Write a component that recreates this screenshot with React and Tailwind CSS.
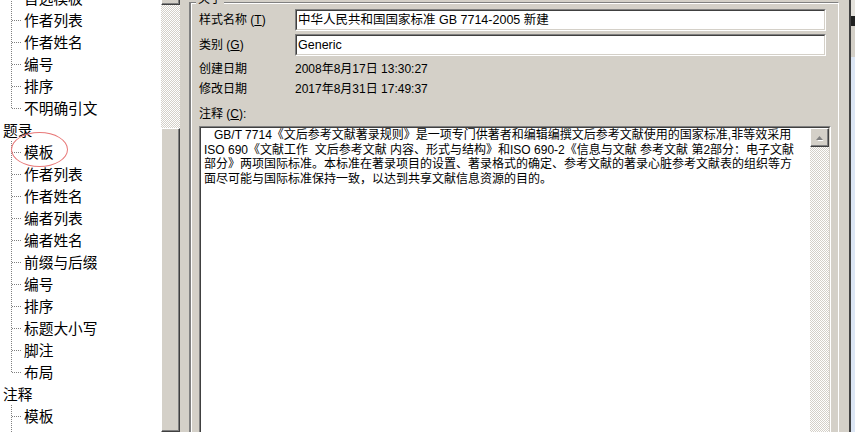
import React from 'react'

const groups = [
  { title: null, items: ['首选模板', '作者列表', '作者姓名', '编号', '排序', '不明确引文'] },
  { title: '题录', items: ['模板', '作者列表', '作者姓名', '编者列表', '编者姓名', '前缀与后缀', '编号', '排序', '标题大小写', '脚注', '布局'] },
  { title: '注释', items: ['模板', ''], more: true },
]

const noteLines = [
  '   GB/T 7714《文后参考文献著录规则》是一项专门供著者和编辑编撰文后参考文献使用的国家标准,非等效采用',
  'ISO 690《文献工作  文后参考文献 内容、形式与结构》和ISO 690-2《信息与文献 参考文献 第2部分：电子文献',
  '部分》两项国际标准。本标准在著录项目的设置、著录格式的确定、参考文献的著录心脏参考文献表的组织等方',
  '面尽可能与国际标准保持一致，以达到共享文献信息资源的目的。',
]

// dotted tree connector for one child row
function Connector({ last }) {
  return (
    <svg width="24" height="22" className="shrink-0">
      <line x1="11.5" y1="0" x2="11.5" y2={last ? 11 : 22} stroke="#808080" strokeDasharray="1 1" />
      <line x1="12" y1="11.5" x2="22" y2="11.5" stroke="#808080" strokeDasharray="1 1" />
    </svg>
  )
}

function Tree() {
  return (
    <div className="w-[161px] h-full bg-white overflow-hidden relative font-['Noto_Sans_CJK_SC',sans-serif] text-[14.7px] text-black">
      <div className="mt-[-13px]">
        {groups.map((g, gi) => (
          <div key={gi}>
            {g.title && (
              <div className="h-[22px] flex items-center pl-[3px]">{g.title}</div>
            )}
            {g.items.map((it, i) => (
              <div key={i} className="h-[22px] flex items-center">
                <Connector last={!g.more && i === g.items.length - 1} />
                <span className="leading-none">{it}</span>
              </div>
            ))}
          </div>
        ))}
      </div>
      {/* red hand-drawn ellipse round the template item */}
      <div className="absolute left-[11px] top-[132px] w-[57px] h-[35px] rounded-[50%] border border-[#e87878]" />
    </div>
  )
}

const raised = 'bg-[#d4d0c8] border-t border-l border-t-white border-l-white border-r border-b border-r-[#404040] border-b-[#404040] shadow-[inset_-1px_-1px_#808080]'
const checker = 'bg-[repeating-conic-gradient(#d4d0c8_0_25%,#ffffff_0_50%)] bg-[length:2px_2px]'

function TreeScroll() {
  return (
    <div className="w-[19px] h-full flex flex-col shrink-0">
      <div className={`h-[5px] ${raised} border-t-0`} />
      <div className={`h-[123px] ${checker}`} />
      <div className={`flex-1 ${raised}`} />
    </div>
  )
}

function Field({ children }) {
  return (
    <div className="w-[531px] h-[22px] border-t border-l border-t-[#808080] border-l-[#808080] border-b border-r border-b-white border-r-white">
      <div className="h-full bg-white border-t border-l border-t-[#404040] border-l-[#404040] border-b border-r border-b-[#d4d0c8] border-r-[#d4d0c8] pl-[1px] flex items-center whitespace-pre text-[12.5px]">
        {children}
      </div>
    </div>
  )
}

function Row({ label, children, className = '' }) {
  return (
    <div className={`flex items-center ${className}`}>
      <div className="w-[96px] shrink-0">{label}</div>
      {children}
    </div>
  )
}

export default function App() {
  return (
    <div className="w-[855px] h-[432px] overflow-hidden flex bg-[#d4d0c8] font-['Liberation_Sans','Noto_Sans_CJK_SC',sans-serif] text-[12px] text-black">
      <Tree />
      <TreeScroll />
      <div className="w-[10px] shrink-0" />

      {/* group box */}
      <div className="w-[649px] shrink-0 mt-[2px] relative border-t border-l border-t-[#808080] border-l-[#808080] border-r border-r-white shadow-[inset_1px_1px_#ffffff,_-1px_0_#808080]">
        <span className="absolute left-[5px] top-[-11px] px-[2px] bg-[#d4d0c8] leading-[14px]">关于</span>
        <div className="pl-[8px] pr-[7px] pt-[6px] flex flex-col">
          <Row label={<>样式名称 (<u>T</u>)</>}>
            <Field>中华人民共和国国家标准 GB 7714-2005 新建</Field>
          </Row>
          <Row label={<>类别 (<u>G</u>)</>} className="mt-[3px]">
            <Field>Generic</Field>
          </Row>
          <Row label="创建日期" className="mt-[3px] h-[20px]">
            <span>2008年8月17日 13:30:27</span>
          </Row>
          <Row label="修改日期" className="h-[20px]">
            <span>2017年8月31日 17:49:37</span>
          </Row>
          <div className="mt-[5px] h-[20px] flex items-center">注释 (<u>C</u>):</div>

          {/* notes text area */}
          <div className="mt-[2px] h-[320px] border-t border-l border-t-[#808080] border-l-[#808080] border-r border-r-white">
            <div className="h-full bg-white border-t border-l border-t-[#404040] border-l-[#404040] border-r border-r-[#d4d0c8] flex">
              <div className="flex-1 min-w-0 overflow-hidden pl-[3px]">
                {noteLines.map((l, i) => (
                  <div key={i} className="h-[14.6px] leading-[14.6px] whitespace-pre">{l}</div>
                ))}
              </div>
              <div className="w-[19px] flex flex-col shrink-0">
                <div className={`h-[19px] ${raised} flex items-center justify-center`}>
                  <svg width="9" height="6" viewBox="0 0 9 6">
                    <path d="M1 5.5 L4.5 1.5 L8 5.5 Z" fill="#ffffff" transform="translate(1 1)" />
                    <path d="M1 5 L4.5 1 L8 5 Z" fill="#808080" />
                  </svg>
                </div>
                <div className={`flex-1 ${checker}`} />
              </div>
            </div>
          </div>
        </div>
      </div>

      <div className="w-[10px] shrink-0" />
      <div className="w-[2px] shrink-0 bg-[#404040]" />
      <div className="flex-1 flex flex-col">
        <div className="h-[16px] bg-[#e4e2dc]" />
        <div className="h-[10px] bg-[#202020]" />
        <div className="h-[31px] bg-[#d4d0c8]" />
        <div className="flex-1 bg-[#dce6f4]" />
      </div>
    </div>
  )
}
